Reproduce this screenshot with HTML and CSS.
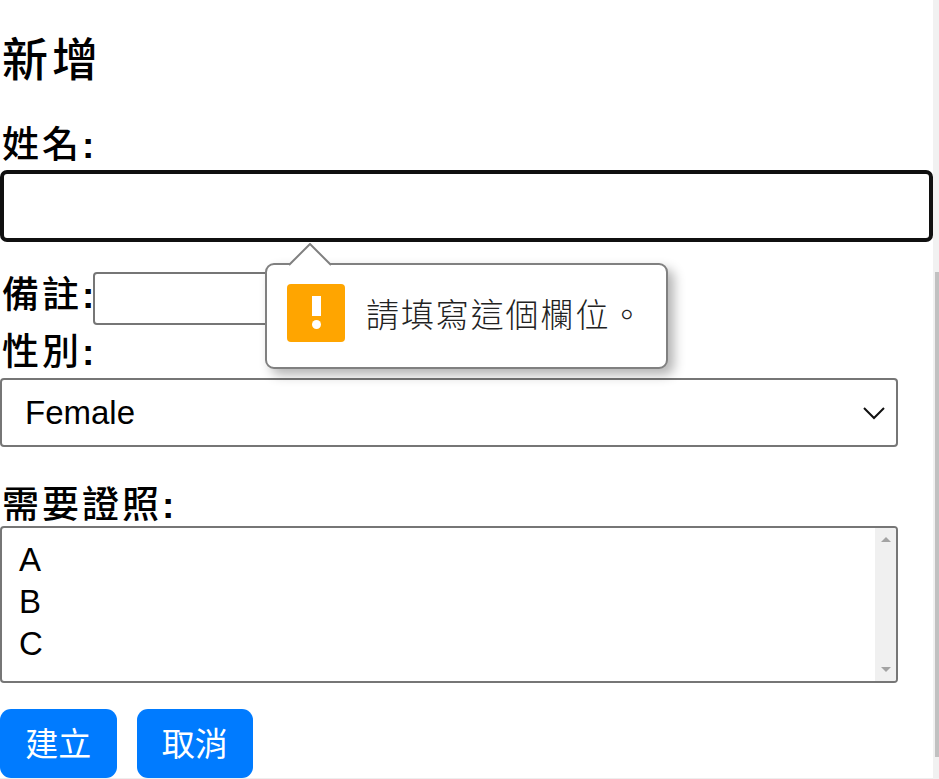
FILE: index.html
```html
<!DOCTYPE html>
<html lang="zh-TW">
<head>
  <meta charset="UTF-8" />
  <title>新增</title>
  <link rel="stylesheet" href="styles.css">
</head>
<body>
  <div class="page">
    <main class="content">
      <h2 class="title">新增</h2>
      <form class="form">
        <label class="label label-name" for="name">姓名<b>:</b></label>
        <input class="input-name" type="text" id="name">

        <div class="remark-row">
          <label class="label" for="remark">備註<b>:</b></label>
          <input class="input-remark" type="text" id="remark">
        </div>

        <label class="label label-gender" for="gender">性別<b>:</b></label>
        <div class="select-box" id="gender">
          <span>Female</span>
          <svg class="chevron" width="24" height="14" viewBox="0 0 24 14">
            <path d="M2 2 L12 12 L22 2" fill="none" stroke="#111" stroke-width="2"/>
          </svg>
        </div>

        <label class="label label-license">需要證照<b>:</b></label>
        <div class="list-box">
          <div class="list-options">
            <div>A</div>
            <div>B</div>
            <div>C</div>
          </div>
          <div class="list-scroll">
            <span class="tri-up"></span>
            <span class="tri-down"></span>
          </div>
        </div>

        <div class="actions">
          <button class="btn" type="button">建立</button>
          <button class="btn" type="button">取消</button>
        </div>
      </form>

      <div class="bubble">
        <svg class="bubble-arrow" width="44" height="23" viewBox="0 0 44 23">
          <path d="M1 22 L22 1 L43 22" fill="#fff" stroke="#808080" stroke-width="2"/>
        </svg>
        <div class="bubble-icon">
          <span class="bang"></span>
          <span class="bang-dot"></span>
        </div>
        <span class="bubble-text">請填寫這個欄位。</span>
      </div>
    </main>
    <div class="page-scroll"><div class="page-thumb"></div></div>
  </div>
</body>
</html>
```

FILE: styles.css
```css
html, body {
  margin: 0;
  height: 779px;
  overflow: hidden;
  background: #fff;
}
body {
  font-family: "Liberation Sans", "Noto Sans CJK TC", sans-serif;
  color: #000;
}
.page {
  display: flex;
  height: 779px;
}
.content {
  position: relative;
  flex: 1;
  min-width: 0;
  border-bottom: 1px solid #eee;
}
.page-scroll {
  width: 6px;
  background: #f1f1f1;
}
.page-thumb {
  margin-top: 272px;
  margin-left: 2px;
  height: 485px;
  background: #c1c1c1;
}
.title {
  margin: 0;
  padding-left: 2px;
  padding-top: 30px;
  font-size: 46px;
  line-height: 60px;
  font-weight: 500;
  letter-spacing: 4px;
}
.label {
  display: block;
  padding-left: 2px;
  font-size: 37px;
  line-height: 46px;
  font-weight: 500;
  letter-spacing: 3px;
}
.label b {
  letter-spacing: 0;
}
.label-name {
  margin-top: 33px;
}
.input-name {
  display: block;
  box-sizing: border-box;
  width: 100%;
  height: 72px;
  margin-top: 1px;
  border: 4px solid #101010;
  border-radius: 7px;
  background: #fff;
  outline: none;
}
.remark-row {
  display: flex;
  align-items: center;
  margin-top: 30px;
}
.remark-row .label {
  width: 91px;
  margin-bottom: 6px;
  white-space: nowrap;
}
.input-remark {
  box-sizing: border-box;
  width: 300px;
  height: 53px;
  border: 2px solid #767676;
  border-radius: 4px;
  background: #fff;
}
.label-gender {
  margin-top: 5px;
}
.select-box {
  display: flex;
  align-items: center;
  justify-content: space-between;
  box-sizing: border-box;
  width: 898px;
  height: 69px;
  margin-top: 2px;
  padding: 1px 10px 0 23px;
  border: 2px solid #767676;
  border-radius: 4px;
  font-size: 33px;
}
.label-license {
  margin-top: 39px;
  line-height: 40px;
}
.list-box {
  display: flex;
  box-sizing: border-box;
  width: 898px;
  height: 157px;
  border: 2px solid #767676;
  border-radius: 4px;
  overflow: hidden;
}
.list-options {
  flex: 1;
  padding: 11px 17px;
  font-size: 33px;
  line-height: 42px;
}
.list-scroll {
  display: flex;
  flex-direction: column;
  justify-content: space-between;
  align-items: center;
  width: 21px;
  padding: 9px 0;
  box-sizing: border-box;
  background: #f0f0f0;
}
.tri-up, .tri-down {
  width: 0;
  height: 0;
  border-left: 5px solid transparent;
  border-right: 5px solid transparent;
}
.tri-up {
  border-bottom: 5px solid #a3a3a3;
}
.tri-down {
  border-top: 5px solid #a3a3a3;
}
.actions {
  display: flex;
  gap: 20px;
  margin-top: 26px;
}
.btn {
  box-sizing: border-box;
  width: 116.5px;
  height: 69px;
  padding: 0 0 3px;
  border: none;
  border-radius: 11px;
  background: #007bff;
  color: #fff;
  font-family: inherit;
  font-size: 33px;
}
.bubble {
  position: absolute;
  left: 265px;
  top: 263px;
  box-sizing: border-box;
  display: flex;
  align-items: center;
  width: 403px;
  height: 106px;
  padding-left: 20px;
  padding-bottom: 6px;
  border: 2px solid #808080;
  border-radius: 9px;
  background: #fff;
  box-shadow: 6px 6px 12px rgba(0, 0, 0, 0.3);
}
.bubble-arrow {
  position: absolute;
  left: 21px;
  top: -22px;
}
.bubble-icon {
  display: flex;
  flex-direction: column;
  align-items: center;
  flex: none;
  box-sizing: border-box;
  width: 58px;
  height: 58px;
  padding-top: 12px;
  border-radius: 4px;
  background: #ffa500;
}
.bang {
  width: 9px;
  height: 20px;
  background: #fff;
}
.bang-dot {
  width: 9px;
  height: 9px;
  margin-top: 4px;
  border-radius: 50%;
  background: #fff;
}
.bubble-text {
  margin-left: 21px;
  font-size: 33px;
  font-weight: 300;
  letter-spacing: 1.9px;
  color: #222;
  white-space: nowrap;
}
```
